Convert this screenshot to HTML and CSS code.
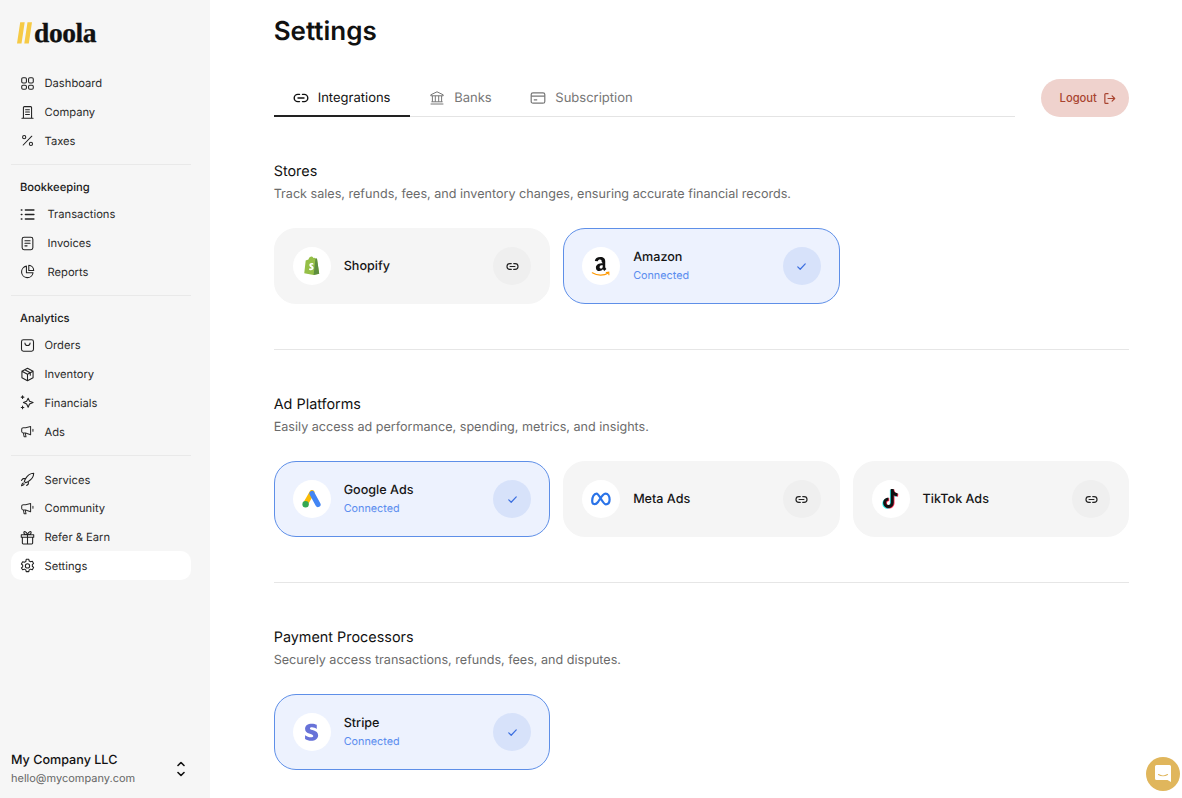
FILE: index.html
```html
<!DOCTYPE html>
<html lang="en">
<head>
<meta charset="utf-8">
<title>Settings</title>
<link rel="stylesheet" href="styles.css">
</head>
<body>
<svg width="0" height="0" class="defs">
  <symbol id="i-link" viewBox="0 0 16 16"><path d="M6.500 4.400H4.800a3.600 3.600 0 0 0 0 7.200h1.700M9.500 4.400h1.700a3.600 3.600 0 0 1 0 7.200H9.500M5 8h6" fill="none" stroke="currentColor" stroke-width="1.400" stroke-linecap="round"/></symbol>
  <symbol id="i-check" viewBox="0 0 16 16"><path d="M3.400 8.400l3 3 6.200-6.600" fill="none" stroke="currentColor" stroke-width="1.500" stroke-linecap="round" stroke-linejoin="round"/></symbol>
  <symbol id="i-mega" viewBox="0 0 16 16"><path d="M11.300 2.600v8.800L6 9.600H3.600A1.800 1.800 0 0 1 1.800 7.800V5.700a1.800 1.800 0 0 1 1.800-1.800H6zM3.600 9.600l.8 4h2l-.8-4M13.800 5.600v2.200" fill="none" stroke="currentColor" stroke-width="1.100" stroke-linecap="round" stroke-linejoin="round"/></symbol>
</svg>
<div class="app">
  <aside class="sidebar">
    <div class="logo"><svg class="logo-mark" viewBox="0 0 15 22" width="15" height="22"><path d="M3.200 0.300h4.500L4.500 21.500H0zM10.500 0.300h4.500L11.800 21.500H7.300z" fill="#f6ca45"/></svg><span class="logo-text">doola</span></div>
    <nav class="nav-group">
      <a class="nav-item"><svg class="ic" viewBox="0 0 14 14"><rect x="1.600" y="1.600" width="4.400" height="5" rx="1.200"/><rect x="8" y="1.600" width="4.400" height="5" rx="1.200"/><rect x="1.600" y="8.600" width="4.400" height="3.800" rx="1.200"/><rect x="8" y="8.600" width="4.400" height="3.800" rx="1.200"/></svg>Dashboard</a>
      <a class="nav-item"><svg class="ic" viewBox="0 0 14 14"><path d="M3.200 12.400V2.400a.9.9 0 0 1 .9-.9h5.800a.9.9 0 0 1 .9.9v10M1.800 12.400h10.400M5.200 4.400h3.600M5.200 6.600h3.600M5.200 8.800h3.600"/></svg>Company</a>
      <a class="nav-item"><svg class="ic" viewBox="0 0 14 14"><path d="M11 3L3 11.200"/><circle cx="3.900" cy="3.900" r="1.500"/><circle cx="10.200" cy="10.200" r="1.500"/></svg>Taxes</a>
    </nav>
    <hr class="nav-rule">
    <div class="nav-title">Bookkeeping</div>
    <nav class="nav-group">
      <a class="nav-item wide"><svg class="ic" viewBox="0 0 14 14"><path d="M5 2.800h8M5 7h8M5 11.200h8M1.200 2.800h.6M1.200 7h.6M1.200 11.200h.6" stroke-width="1.300"/></svg>Transactions</a>
      <a class="nav-item wide"><svg class="ic" viewBox="0 0 14 14"><rect x="2" y="1.200" width="10" height="11.600" rx="1.800"/><path d="M4.600 4.400h4.800M4.600 6.800h4.800M4.600 9.200h2"/></svg>Invoices</a>
      <a class="nav-item wide"><svg class="ic" viewBox="0 0 14 14"><path d="M6 2a5.400 5.400 0 1 0 6.200 6.200H6zM8.200 1.200a5 5 0 0 1 4.600 4.800H8.200z"/></svg>Reports</a>
    </nav>
    <hr class="nav-rule">
    <div class="nav-title">Analytics</div>
    <nav class="nav-group">
      <a class="nav-item"><svg class="ic" viewBox="0 0 14 14"><rect x="1.400" y="1.600" width="11.200" height="10.800" rx="1.800"/><path d="M4.600 4.600a2.400 2.400 0 0 0 4.800 0"/></svg>Orders</a>
      <a class="nav-item"><svg class="ic" viewBox="0 0 14 14"><path d="M7 1.200l5.200 2.700v6.200L7 12.800l-5.200-2.700V3.900zM1.800 3.900L7 6.800l5.200-2.900M7 6.800v6M4.400 2.600l5.200 2.800v2.200"/></svg>Inventory</a>
      <a class="nav-item"><svg class="ic" viewBox="0 0 14 14"><path d="M7.600 3l1.300 2.800 3.300 1.200-3.300 1.400-1.300 3-1.400-3L3.200 7l3-1.200zM2.400.8v2.400M1.200 2h2.400M2.400 10.400v2.400M1.200 11.600h2.400"/></svg>Financials</a>
      <a class="nav-item"><svg class="ic" viewBox="0 0 16 16"><use href="#i-mega"/></svg>Ads</a>
    </nav>
    <hr class="nav-rule rule-tight">
    <nav class="nav-group">
      <a class="nav-item"><svg class="ic" viewBox="0 0 14 14"><path d="M12.800 1.200c-3.400.1-5.600 1.600-7.600 5L4 8.800l1.200 1.200 2.600-1.200c3.400-2 4.900-4.200 5-7.600zM5.200 6.200H2.800L1.400 7.800M7.800 8.800v2.400l-1.600 1.400M3 10.200c-.9.5-1.400 1.300-1.600 2.600 1.300-.2 2.100-.7 2.600-1.600"/></svg>Services</a>
      <a class="nav-item"><svg class="ic" viewBox="0 0 16 16"><use href="#i-mega"/></svg>Community</a>
      <a class="nav-item"><svg class="ic" viewBox="0 0 14 14"><path d="M1.200 4.400h11.600v2.400H1.200zM2.200 6.800v5.400a.8.8 0 0 0 .8.8h8a.8.8 0 0 0 .8-.8V6.800M7 4.400V13M7 4.400C5 4.400 3.600 3.700 3.600 2.400S5.800 .8 7 4.400zM7 4.400C8.200 .8 10.400 1.100 10.400 2.400S9 4.400 7 4.400z"/></svg>Refer &amp; Earn</a>
      <a class="nav-item active"><svg class="ic" viewBox="0 0 14 14"><path d="M5.800 1.200h2.400l.4 1.600 1.300.7 1.600-.5 1.200 2.100-1.200 1.100v1.500l1.200 1.100-1.200 2.100-1.600-.5-1.300.7-.4 1.600H5.800l-.4-1.600-1.300-.7-1.600.5L1.300 9.300l1.200-1.100V6.700L1.300 5.600l1.200-2.100 1.600.5 1.300-.7z"/><circle cx="7" cy="7.400" r="2"/></svg>Settings</a>
    </nav>
    <div class="account">
      <div class="account-text">
        <div class="account-name">My Company LLC</div>
        <div class="account-mail">hello@mycompany.com</div>
      </div>
      <svg class="updown" viewBox="0 0 10 18" width="10" height="18"><path d="M2 5.500l3-3 3 3M2 12.500l3 3 3-3" fill="none" stroke="#111" stroke-width="1.600" stroke-linecap="round" stroke-linejoin="round"/></svg>
    </div>
  </aside>

  <main class="main">
    <h1 class="title">Settings</h1>
    <div class="tabbar">
      <div class="tabs">
        <a class="tab tab-active"><svg class="tab-ic" viewBox="0 0 16 16"><use href="#i-link"/></svg>Integrations</a>
        <a class="tab"><svg class="tab-ic" viewBox="0 0 16 16"><path d="M8 1.800l6.200 3v1H1.800v-1zM3.400 5.800v6M6.300 5.800v6M9.700 5.800v6M12.600 5.800v6M2.400 11.800h11.200M1.600 14h12.800" fill="none" stroke="currentColor" stroke-width="1" stroke-linejoin="round"/></svg>Banks</a>
        <a class="tab"><svg class="tab-ic" viewBox="0 0 16 16"><rect x="1.200" y="2.800" width="13.600" height="10.400" rx="1.800" fill="none" stroke="currentColor" stroke-width="1.200"/><path d="M1.200 6.200h13.600M3.800 9.800h3.400" fill="none" stroke="currentColor" stroke-width="1.200"/></svg>Subscription</a>
      </div>
      <button class="logout">Logout<svg class="logout-ic" viewBox="0 0 14 14" width="13" height="13"><path d="M5.400 1.800H3a1 1 0 0 0-1 1v8.400a1 1 0 0 0 1 1h2.400M5.400 7h7M9.800 4.200L12.600 7l-2.800 2.800" fill="none" stroke="currentColor" stroke-width="1.300" stroke-linecap="round" stroke-linejoin="round"/></svg></button>
    </div>

    <section class="section">
      <h2 class="sec-title">Stores</h2>
      <p class="sec-desc">Track sales, refunds, fees, and inventory changes, ensuring accurate financial records.</p>
      <div class="cards">
        <div class="card">
          <span class="logo-disc"><svg viewBox="0 0 20 22" width="18" height="20"><path d="M3 4.800L6 3.800C7 1 8.600.4 9.800.5c.8.100 1.400.6 1.800 1.500l1.200-.3 1.200 1.200 1.600.2L18 19.600 11.800 21 1.400 19.100z" fill="#95bf47"/><path d="M13.900 2.400l1.600.2L18 19.600 11.800 21z" fill="#5e8e3e"/><path d="M11.500 8.200c-.5-.3-1.200-.4-1.800-.4-1.600 0-2.700 1-2.700 2.300 0 1.900 2.600 2 2.600 3.100 0 .4-.3.700-.9.700-.8 0-1.600-.5-1.600-.5l-.5 1.700s.8.600 2.200.6c1.800 0 3-1.100 3-2.700 0-2.100-2.600-2.300-2.600-3.200 0-.2.200-.6.900-.6.600 0 1.400.3 1.400.3z" fill="#fff"/></svg></span>
          <span class="card-text"><span class="card-name">Shopify</span></span>
          <span class="action"><svg class="act-ic" viewBox="0 0 16 16"><use href="#i-link"/></svg></span>
        </div>
        <div class="card on">
          <span class="logo-disc"><svg viewBox="0 0 22 24" width="24" height="26"><path d="M12.600 9.500c-3.600.1-6.300 1.100-6.300 4.100 0 2.100 1.400 3.100 3.100 3.100 1.500 0 2.500-.6 3.400-1.600.4.600.6.900 1.200 1.400l2-1.700c-.6-.6-1.100-1.100-1.100-2.100V7.500c0-1.900-1.300-3.700-4.500-3.700-3 0-4.800 1.500-5.100 3.500l2.800.3c.2-1 .9-1.500 1.900-1.500 1.300 0 1.600.8 1.600 1.900zm0 3c0 1.100-.6 1.900-1.600 1.900-.8 0-1.300-.5-1.300-1.300 0-1.400 1.300-1.700 2.900-1.700z" fill="#111"/><path d="M3 18.300c4.600 2.900 10.600 2.900 14.800.2" fill="none" stroke="#f90" stroke-width="1.100" stroke-linecap="round"/><path d="M15.800 18l2.400-.3.100 2.300" fill="none" stroke="#f90" stroke-width="1" stroke-linecap="round"/></svg></span>
          <span class="card-text"><span class="card-name">Amazon</span><span class="card-status">Connected</span></span>
          <span class="action"><svg class="act-ic" viewBox="0 0 16 16"><use href="#i-check"/></svg></span>
        </div>
      </div>
    </section>
    <hr class="rule">

    <section class="section">
      <h2 class="sec-title">Ad Platforms</h2>
      <p class="sec-desc">Easily access ad performance, spending, metrics, and insights.</p>
      <div class="cards">
        <div class="card on">
          <span class="logo-disc"><svg viewBox="0 0 20 18" width="20" height="18"><path d="M10 2.500L4 13" stroke="#fbbc04" stroke-width="5" stroke-linecap="round"/><path d="M10 3.500L16 14.500" stroke="#4285f4" stroke-width="5.200" stroke-linecap="round"/><circle cx="3.600" cy="14.200" r="3.200" fill="#34a853"/></svg></span>
          <span class="card-text"><span class="card-name">Google Ads</span><span class="card-status">Connected</span></span>
          <span class="action"><svg class="act-ic" viewBox="0 0 16 16"><use href="#i-check"/></svg></span>
        </div>
        <div class="card">
          <span class="logo-disc"><svg viewBox="0 0 20 14" width="20" height="14"><path d="M3 12C1.600 12 1.200 10.500 1.200 8.800 1.200 5 3 1.600 5.500 1.600c3 0 6 10.800 9.300 10.800 2.400 0 3.800-2 3.800-4.800C18.600 4.200 17 1.600 14.500 1.600 11.500 1.600 8.500 8 7 10c-1.300 1.700-2.500 2.300-4 2z" fill="none" stroke="#2a73e8" stroke-width="2.200"/></svg></span>
          <span class="card-text"><span class="card-name">Meta Ads</span></span>
          <span class="action"><svg class="act-ic" viewBox="0 0 16 16"><use href="#i-link"/></svg></span>
        </div>
        <div class="card">
          <span class="logo-disc"><svg viewBox="0 0 20 22" width="20" height="22"><g fill="none" stroke-width="3"><path d="M11.200 1v13.800a3.800 3.800 0 1 1-3.800-3.800M11.200 2c.3 2.700 2.200 4.500 5.200 4.800" stroke="#25f4ee" transform="translate(-.8 .8)"/><path d="M11.200 1v13.800a3.800 3.800 0 1 1-3.800-3.800M11.200 2c.3 2.700 2.200 4.500 5.200 4.800" stroke="#fe2c55" transform="translate(.8 .4)"/><path d="M11.200 1v13.800a3.800 3.800 0 1 1-3.800-3.800M11.200 2c.3 2.700 2.200 4.500 5.200 4.800" stroke="#111"/></g></svg></span>
          <span class="card-text"><span class="card-name">TikTok Ads</span></span>
          <span class="action"><svg class="act-ic" viewBox="0 0 16 16"><use href="#i-link"/></svg></span>
        </div>
      </div>
    </section>
    <hr class="rule">

    <section class="section">
      <h2 class="sec-title">Payment Processors</h2>
      <p class="sec-desc">Securely access transactions, refunds, fees, and disputes.</p>
      <div class="cards">
        <div class="card on">
          <span class="logo-disc"><svg viewBox="0 0 14 18" width="15" height="19"><path d="M12 5.600C10.800 4.700 9.100 4 7.500 4c-1.200 0-2 .4-2 1.100 0 2 7.800.9 7.800 6.500 0 3.300-2.700 5.300-6.600 5.300-2.100 0-4.200-.6-5.800-1.700v-3.700c1.500 1.100 3.800 2 5.600 2 1.300 0 2.200-.4 2.200-1.200C8.700 10 .9 11 .9 5.500.9 2.400 3.400.6 7.300.6c1.800 0 3.500.4 4.700 1.100z" fill="#6772d8"/></svg></span>
          <span class="card-text"><span class="card-name">Stripe</span><span class="card-status">Connected</span></span>
          <span class="action"><svg class="act-ic" viewBox="0 0 16 16"><use href="#i-check"/></svg></span>
        </div>
      </div>
    </section>
  </main>
</div>
<button class="chat" aria-label="Chat"><svg viewBox="0 0 18 20" width="18" height="20"><path d="M2.500 1h13A1.500 1.500 0 0 1 17 2.500V18l-3.500-2h-11A1.500 1.500 0 0 1 1 14.500v-12A1.500 1.500 0 0 1 2.500 1z" fill="#fff"/><path d="M4.500 10.500c2.500 1.700 6.500 1.700 9 0" fill="none" stroke="#e0b65c" stroke-width="1.100" stroke-linecap="round"/></svg></button>
</body>
</html>
```

FILE: styles.css
```css
* { box-sizing: border-box; }
html, body { margin: 0; height: 100%; overflow: hidden; }
body { font-family: Inter, "Liberation Sans", sans-serif; background: #fff; color: #111; text-rendering: geometricPrecision; }
.defs { position: absolute; }
.app { display: flex; height: 798px; }

.sidebar { width: 210px; flex: none; background: #f6f6f6; padding: 19px 19px 11px 11px; display: flex; flex-direction: column; }
.logo { display: flex; align-items: flex-end; gap: 2px; height: 28px; padding-left: 6px; margin-bottom: 22px; }
.logo-mark { margin-bottom: 3px; }
.logo-text { font-family: "Liberation Serif", serif; font-weight: 700; font-size: 27.500px; line-height: 28px; letter-spacing: -0.4px; color: #111; -webkit-text-stroke: 0.3px #111; }
.nav-group { display: flex; flex-direction: column; }
.nav-item { display: flex; align-items: center; height: 28.700px; padding-left: 9px; gap: 9.500px; font-size: 11.200px; color: #2c2c2c; border-radius: 10px; }
.nav-item.wide { gap: 12.500px; }
.nav-item.active { background: #fff; }
.ic { width: 15px; height: 15px; flex: none; fill: none; stroke: #222; stroke-width: 1; stroke-linecap: round; stroke-linejoin: round; }
.nav-rule { width: 100%; border: 0; border-top: 1px solid #e9e9e9; margin: 9px 0 15px; }
.rule-tight { margin: 9px 0 9.500px; }
.nav-title { font-size: 11.200px; font-weight: 500; color: #1a1a1a; line-height: 15px; padding-left: 9px; margin-bottom: 5px; }
.account { margin-top: auto; display: flex; align-items: center; justify-content: space-between; }
.account-name { font-size: 12.600px; font-weight: 500; line-height: 16px; color: #111; }
.account-mail { font-size: 11px; line-height: 17px; margin-top: 1px; color: #666; }
.updown { margin: 0 5px 3px 0; }

.main { flex: 1; padding: 0 53px 0 63.700px; }
.title { margin: 17px 0 0; font-size: 26px; line-height: 30px; font-weight: 600; color: #111; }
.tabbar { display: flex; align-items: center; gap: 26px; margin-top: 32px; }
.tabs { flex: 1; display: flex; height: 38px; border-bottom: 1px solid #e4e4e4; }
.tab { display: flex; align-items: center; gap: 9px; height: 38px; padding: 0 19.700px 0 19px; font-size: 13px; color: #777; }
.tab-active { color: #111; border-bottom: 2px solid #222; padding-top: 2px; }
.tab-ic { width: 16px; height: 16px; flex: none; }
.logout { display: flex; align-items: center; justify-content: center; gap: 6.500px; width: 88px; height: 38px; flex: none; padding: 0 0 0 6px; border: 0; border-radius: 19px; background: #efd2cd; color: #a8432f; font: 500 11.200px Inter, sans-serif; }
.logout-ic { flex: none; }

.section { padding-top: 46px; }
.sec-title { margin: 0; font-size: 14.400px; line-height: 18px; font-weight: 400; color: #111; }
.sec-desc { margin: 4.500px 0 0; font-size: 12.600px; line-height: 18px; color: #6b6b6b; }
.cards { display: grid; grid-template-columns: repeat(3, 1fr); gap: 13px; margin-top: 24.500px; }
.card { display: flex; align-items: center; height: 76px; padding: 0 18px; border: 1px solid #f5f5f5; border-radius: 22px; background: #f5f5f5; }
.card.on { background: #edf2fe; border-color: #5e8fe8; }
.logo-disc { width: 38px; height: 38px; flex: none; border-radius: 50%; background: #fff; display: flex; align-items: center; justify-content: center; }
.card-text { flex: 1; display: flex; flex-direction: column; margin-left: 13px; padding-top: 2px; }
.card-name { font-size: 12.600px; font-weight: 500; line-height: 18px; color: #151515; }
.card-status { font-size: 10.800px; line-height: 18px; margin-top: 0.500px; color: #5b8def; }
.action { width: 38px; height: 38px; flex: none; border-radius: 50%; background: #efefef; color: #222; display: flex; align-items: center; justify-content: center; }
.card.on .action { background: #d7e2fa; color: #3c6fe0; }
.act-ic { width: 13px; height: 13px; }
.rule { border: 0; border-top: 1px solid #e6e6e6; margin: 45px 0 0; }

.chat { position: fixed; left: 1146px; top: 757px; width: 34px; height: 34px; padding: 0; border: 0; border-radius: 50%; background: #e0b65c; display: flex; align-items: center; justify-content: center; }
```
